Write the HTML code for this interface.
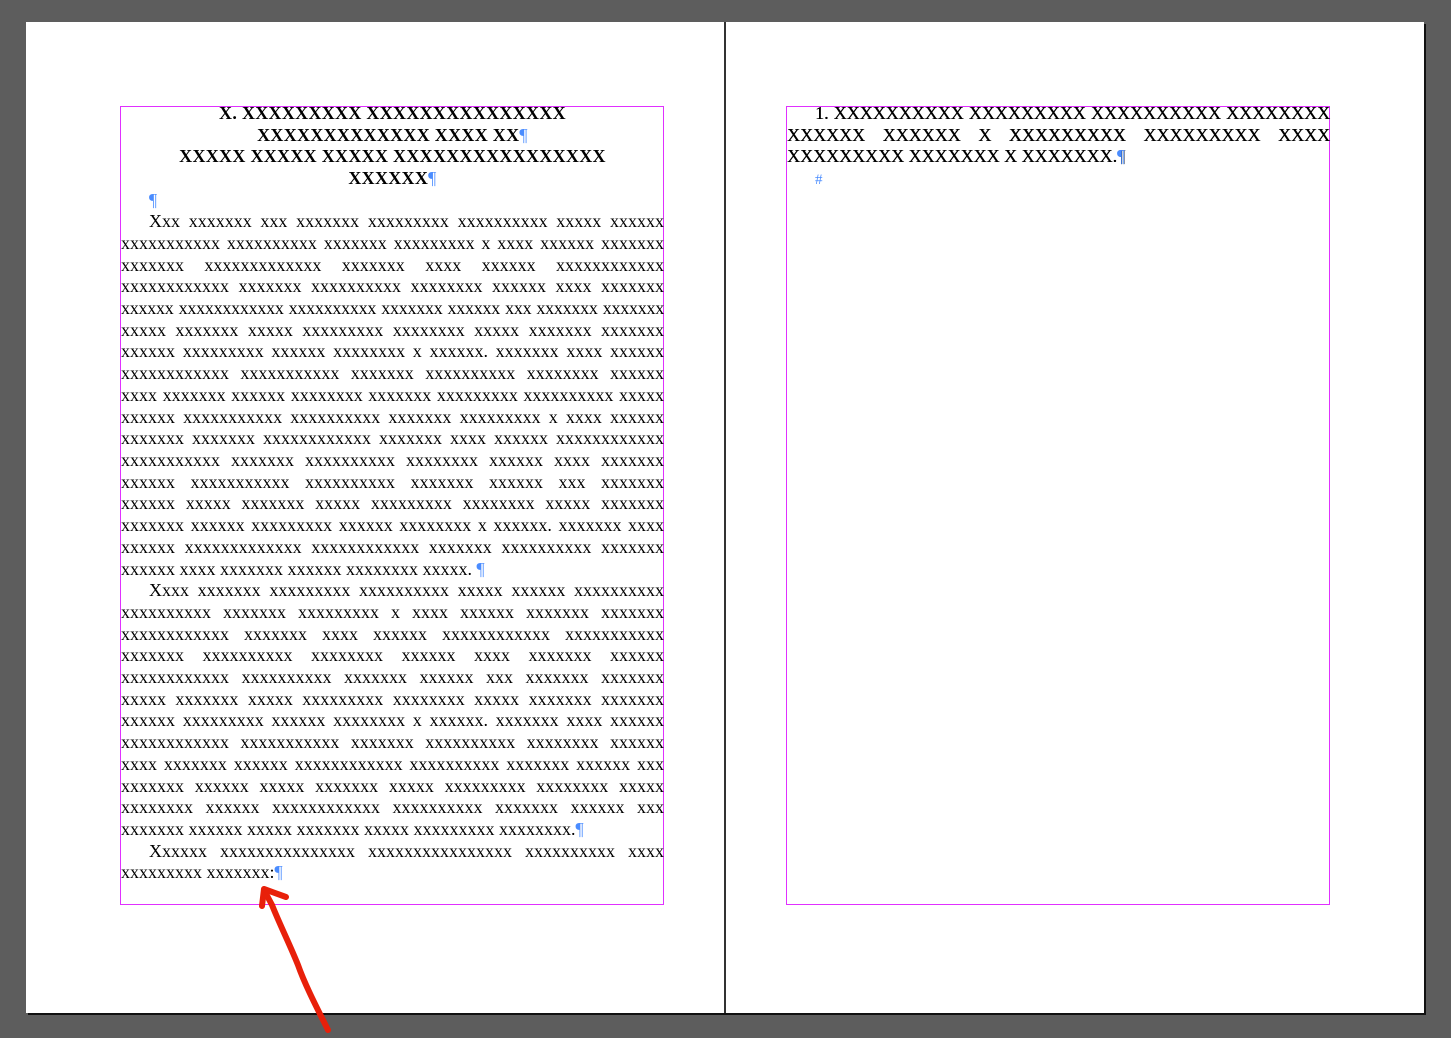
<!DOCTYPE html>
<html><head><meta charset="utf-8"><style>
body{margin:0;width:1451px;height:1038px;background:#5d5d5d;position:relative;overflow:hidden;font-family:"Liberation Serif",serif;}
.page{position:absolute;top:22px;height:991px;background:#fff;}
.sh{position:absolute;background:#111;}
.box{position:absolute;border:1px solid #e030ff;box-sizing:border-box;}
.l{position:absolute;left:0;width:543px;height:22px;font-size:18px;line-height:22px;white-space:nowrap;text-align:justify;text-align-last:justify;color:#000;}
.l.e{text-align-last:left;}
.l.c{text-align:center;text-align-last:center;font-weight:bold;letter-spacing:0.3px;}
.i{text-indent:28px;}
.p{color:#4a8cff;font-weight:normal;}
.r{text-shadow:0.4px 0 0 #000;}
</style></head><body>
<div class="page" style="left:26px;width:1398px"></div>
<div class="sh" style="left:1424px;top:24px;width:2px;height:991px"></div>
<div class="sh" style="left:28px;top:1013px;width:1398px;height:2px"></div>
<div class="sh" style="left:724px;top:22px;width:2px;height:991px;background:#333"></div>

<div class="box" style="left:120px;top:106px;width:544px;height:799px"></div>
<div style="position:absolute;left:121px;top:102px;width:543px">
<div class="l c" style="top:0">X. XXXXXXXXX XXXXXXXXXXXXXXX</div>
<div class="l c" style="top:22px">XXXXXXXXXXXXX XXXX XX<span class="p">¶</span></div>
<div class="l c" style="top:43px">XXXXX XXXXX XXXXX XXXXXXXXXXXXXXXX</div>
<div class="l c" style="top:65px">XXXXXX<span class="p">¶</span></div>
<div class="l e i" style="top:87px"><span class="p">¶</span></div>
<div class="l i" style="top:108px">Xxx xxxxxxx xxx  xxxxxxx xxxxxxxxx xxxxxxxxxx xxxxx xxxxxx</div>
<div class="l" style="top:130px">xxxxxxxxxxx xxxxxxxxxx xxxxxxx xxxxxxxxx x xxxx xxxxxx xxxxxxx</div>
<div class="l" style="top:152px">xxxxxxx xxxxxxxxxxxxx xxxxxxx xxxx xxxxxx xxxxxxxxxxxx</div>
<div class="l" style="top:173px">xxxxxxxxxxxx xxxxxxx xxxxxxxxxx xxxxxxxx xxxxxx xxxx xxxxxxx</div>
<div class="l" style="top:195px;letter-spacing:-0.25px;word-spacing:-1px">xxxxxx xxxxxxxxxxxx xxxxxxxxxx xxxxxxx xxxxxx xxx xxxxxxx xxxxxxx</div>
<div class="l" style="top:217px">xxxxx xxxxxxx xxxxx xxxxxxxxx xxxxxxxx xxxxx xxxxxxx xxxxxxx</div>
<div class="l" style="top:238px">xxxxxx xxxxxxxxx xxxxxx xxxxxxxx x xxxxxx. xxxxxxx xxxx xxxxxx</div>
<div class="l" style="top:260px">xxxxxxxxxxxx xxxxxxxxxxx xxxxxxx xxxxxxxxxx xxxxxxxx xxxxxx</div>
<div class="l" style="top:282px">xxxx xxxxxxx xxxxxx xxxxxxxx xxxxxxx xxxxxxxxx xxxxxxxxxx xxxxx</div>
<div class="l" style="top:304px">xxxxxx xxxxxxxxxxx xxxxxxxxxx xxxxxxx xxxxxxxxx x xxxx xxxxxx</div>
<div class="l" style="top:325px">xxxxxxx xxxxxxx xxxxxxxxxxxx xxxxxxx xxxx xxxxxx xxxxxxxxxxxx</div>
<div class="l" style="top:347px">xxxxxxxxxxx xxxxxxx xxxxxxxxxx xxxxxxxx xxxxxx xxxx xxxxxxx</div>
<div class="l" style="top:369px">xxxxxx xxxxxxxxxxx xxxxxxxxxx xxxxxxx xxxxxx xxx xxxxxxx</div>
<div class="l" style="top:390px">xxxxxx xxxxx xxxxxxx xxxxx xxxxxxxxx xxxxxxxx xxxxx xxxxxxx</div>
<div class="l" style="top:412px">xxxxxxx xxxxxx xxxxxxxxx xxxxxx xxxxxxxx x xxxxxx. xxxxxxx xxxx</div>
<div class="l" style="top:434px">xxxxxx xxxxxxxxxxxxx xxxxxxxxxxxx xxxxxxx xxxxxxxxxx xxxxxxx</div>
<div class="l e" style="top:456px">xxxxxx xxxx xxxxxxx xxxxxx xxxxxxxx xxxxx. <span class="p">¶</span></div>
<div class="l i" style="top:477px">Xxxx xxxxxxx xxxxxxxxx xxxxxxxxxx xxxxx xxxxxx xxxxxxxxxx</div>
<div class="l" style="top:499px">xxxxxxxxxx xxxxxxx xxxxxxxxx x xxxx xxxxxx xxxxxxx xxxxxxx</div>
<div class="l" style="top:521px">xxxxxxxxxxxx xxxxxxx xxxx xxxxxx xxxxxxxxxxxx xxxxxxxxxxx</div>
<div class="l" style="top:542px">xxxxxxx xxxxxxxxxx xxxxxxxx xxxxxx xxxx xxxxxxx xxxxxx</div>
<div class="l" style="top:564px">xxxxxxxxxxxx xxxxxxxxxx xxxxxxx xxxxxx xxx xxxxxxx xxxxxxx</div>
<div class="l" style="top:586px">xxxxx xxxxxxx xxxxx xxxxxxxxx xxxxxxxx xxxxx xxxxxxx xxxxxxx</div>
<div class="l" style="top:607px">xxxxxx xxxxxxxxx xxxxxx xxxxxxxx x xxxxxx. xxxxxxx xxxx xxxxxx</div>
<div class="l" style="top:629px">xxxxxxxxxxxx xxxxxxxxxxx xxxxxxx xxxxxxxxxx xxxxxxxx xxxxxx</div>
<div class="l" style="top:651px">xxxx xxxxxxx xxxxxx xxxxxxxxxxxx xxxxxxxxxx xxxxxxx xxxxxx xxx</div>
<div class="l" style="top:673px">xxxxxxx xxxxxx xxxxx xxxxxxx xxxxx xxxxxxxxx xxxxxxxx xxxxx</div>
<div class="l" style="top:694px">xxxxxxxx xxxxxx xxxxxxxxxxxx xxxxxxxxxx xxxxxxx xxxxxx xxx</div>
<div class="l e" style="top:716px">xxxxxxx xxxxxx xxxxx xxxxxxx xxxxx xxxxxxxxx xxxxxxxx.<span class="p">¶</span></div>
<div class="l i" style="top:738px">Xxxxxx xxxxxxxxxxxxxxx xxxxxxxxxxxxxxxx xxxxxxxxxx xxxx</div>
<div class="l e" style="top:759px">xxxxxxxxx xxxxxxx:<span class="p">¶</span></div>
</div>

<div class="box" style="left:786px;top:106px;width:544px;height:799px"></div>
<div style="position:absolute;left:787px;top:102px;width:543px">
<div class="l i r" style="top:0">1. XXXXXXXXXX XXXXXXXXX XXXXXXXXXX XXXXXXXX</div>
<div class="l r" style="top:22px">XXXXXX XXXXXX X XXXXXXXXX XXXXXXXXX XXXX</div>
<div class="l e r" style="top:43px">XXXXXXXXX XXXXXXX X XXXXXXX.<span class="p">¶</span></div>
<div class="l e i" style="top:67px;font-size:15px"><span class="p">#</span></div>
</div>

<svg style="position:absolute;left:0;top:0" width="1451" height="1038">
<path d="M328 1030 C318 1010 305 985 298 965 C290 945 280 925 272 905 L264 890" fill="none" stroke="#e8200a" stroke-width="6" stroke-linecap="round"/>
<path d="M262 906 L264 889 L286 897" fill="none" stroke="#e8200a" stroke-width="6" stroke-linecap="round" stroke-linejoin="round"/>
</svg>
</body></html>
